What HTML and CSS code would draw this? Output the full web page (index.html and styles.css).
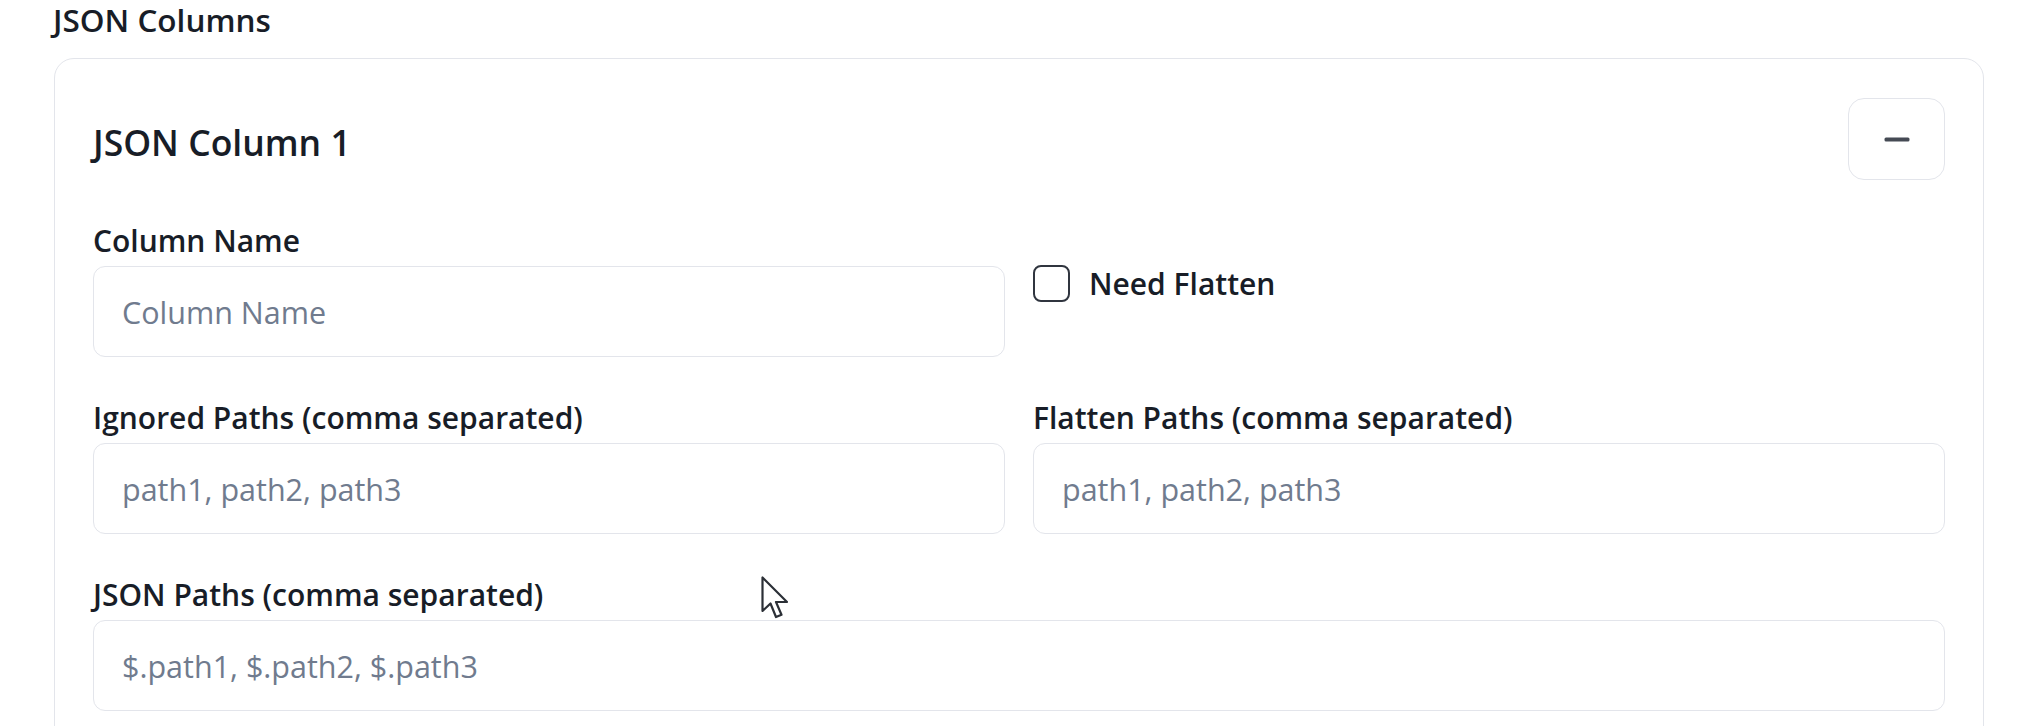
FILE: index.html
```html
<!DOCTYPE html>
<html lang="en">
<head>
<meta charset="utf-8">
<title>JSON Columns</title>
<link rel="stylesheet" href="styles.css">
</head>
<body>
<div class="page">
  <h3 class="section-title">JSON Columns</h3>
  <div class="card">
    <div class="card-head">
      <h4 class="card-title">JSON Column 1</h4>
      <button class="icon-btn" type="button" aria-label="Collapse">
        <svg width="26" height="5" viewBox="0 0 26 5"><rect x="0.5" y="0.5" width="25" height="4" rx="1.5" fill="#454a54"/></svg>
      </button>
    </div>
    <div class="fields">
      <div class="field">
        <label class="label">Column Name</label>
        <input class="input" type="text" placeholder="Column Name">
      </div>
      <div class="field check-field">
        <label class="check"><span class="box"></span>Need Flatten</label>
      </div>
      <div class="field">
        <label class="label">Ignored Paths (comma separated)</label>
        <input class="input" type="text" placeholder="path1, path2, path3">
      </div>
      <div class="field">
        <label class="label">Flatten Paths (comma separated)</label>
        <input class="input" type="text" placeholder="path1, path2, path3">
      </div>
      <div class="field full">
        <label class="label">JSON Paths (comma separated)</label>
        <input class="input" type="text" placeholder="$.path1, $.path2, $.path3">
      </div>
    </div>
  </div>
  <svg class="cursor" width="30" height="46" viewBox="0 0 30 46">
    <path d="M1.5 1.5 L1.5 35 L9.5 27.5 L15 41 L20.5 38.8 L15 26 L26 26 Z" fill="#fff" stroke="#2b2f36" stroke-width="2.2" stroke-linejoin="round"/>
  </svg>
</div>
</body>
</html>
```

FILE: styles.css
```css
* { box-sizing: border-box; }

html, body {
  margin: 0;
  padding: 0;
  overflow: hidden;
  background: #ffffff;
}

body {
  font-family: "Open Sans", "Noto Sans", sans-serif;
  color: #181d27;
}

.page {
  position: relative;
  padding: 0 48px 0 53px;
}

.section-title {
  margin: 0 0 18px 0;
  font-size: 31.5px;
  line-height: 40px;
  font-weight: 600;
}

.card {
  border: 1px solid #e3e5eb;
  border-radius: 20px;
  padding: 39px 38px 39px 38px;
  margin-left: 1px;
}

.card-head {
  display: flex;
  align-items: center;
  justify-content: space-between;
  height: 82px;
}

.card-title {
  margin: 0;
  padding-top: 6px;
  font-size: 35.5px;
  line-height: 40px;
  font-weight: 600;
}

.icon-btn {
  width: 97px;
  height: 82px;
  border: 1.5px solid #e3e5eb;
  border-radius: 16px;
  background: #ffffff;
  display: flex;
  align-items: center;
  justify-content: center;
  padding: 0;
}

.fields {
  margin-top: 44px;
  display: grid;
  grid-template-columns: 1fr 1fr;
  column-gap: 28px;
  row-gap: 44px;
}

.field.full {
  grid-column: 1 / span 2;
}

.label {
  display: block;
  font-size: 30px;
  line-height: 34px;
  font-weight: 600;
  margin-bottom: 8px;
}

.input {
  display: block;
  width: 100%;
  height: 91px;
  border: 1.5px solid #e3e5eb;
  border-radius: 12px;
  padding: 0 28px;
  font-family: "Open Sans", "Noto Sans", sans-serif;
  font-size: 30.5px;
  color: #181d27;
  background: #ffffff;
  outline: none;
}

.input::placeholder {
  color: #707b8e;
}

.check-field {
  padding-top: 41px;
}

.check {
  display: flex;
  align-items: center;
  gap: 19px;
  font-size: 30px;
  line-height: 37px;
  font-weight: 600;
}

.box {
  width: 37px;
  height: 37px;
  border: 2.8px solid #30353f;
  border-radius: 8px;
  background: #ffffff;
}

.cursor {
  position: absolute;
  left: 761px;
  top: 576px;
}
```
